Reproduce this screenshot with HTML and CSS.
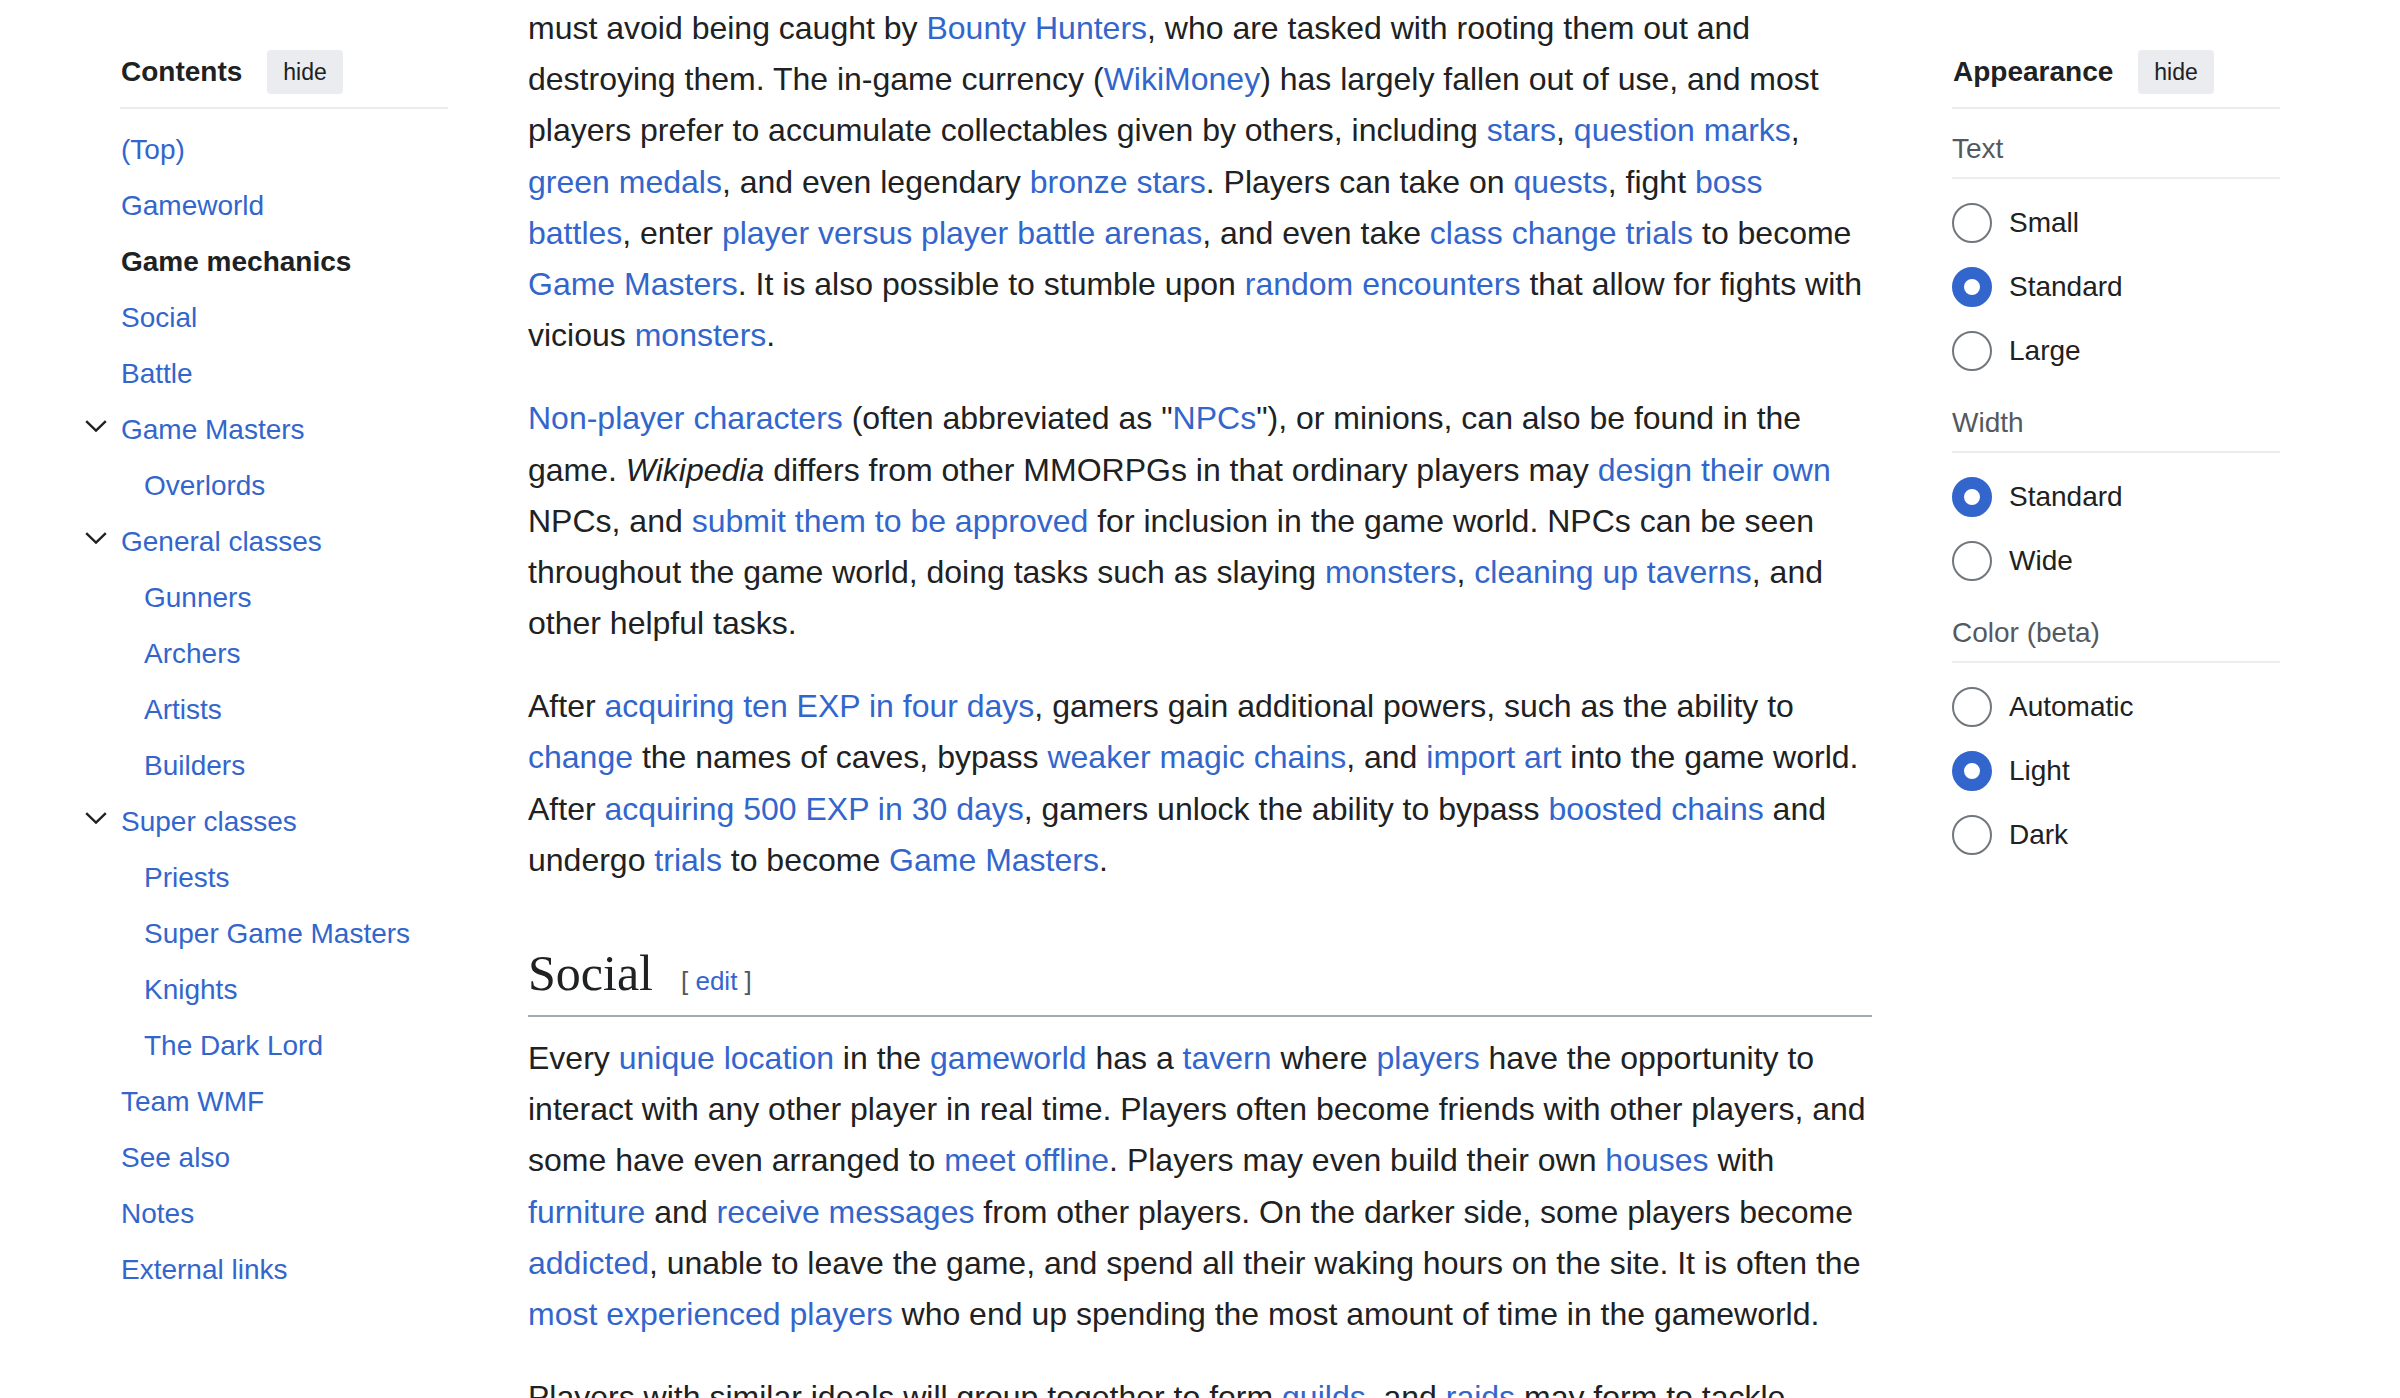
FILE: index.html
```html
<!DOCTYPE html>
<html lang="en">
<head>
<meta charset="utf-8">
<title>Wikipedia — Game mechanics</title>
<link rel="stylesheet" href="styles.css">
</head>
<body>
<div class="page">
  <nav class="toc">
    <div class="panel-header">
      <span class="panel-title">Contents</span>
      <button class="hide-btn">hide</button>
    </div>
    <ul class="toc-list">
      <li><a class="toc-link" href="#">(Top)</a></li>
      <li><a class="toc-link" href="#">Gameworld</a></li>
      <li><span class="toc-link active">Game mechanics</span></li>
      <li><a class="toc-link" href="#">Social</a></li>
      <li><a class="toc-link" href="#">Battle</a></li>
      <li class="has-children">
        <button class="toggle" aria-label="Toggle"><svg width="22" height="12" viewBox="0 0 22 12"><path d="M1.2 1.2 L11 10.6 L20.8 1.2" fill="none" stroke="#202122" stroke-width="2.4"/></svg></button>
        <a class="toc-link" href="#">Game Masters</a>
        <ul class="toc-sub">
          <li><a class="toc-link" href="#">Overlords</a></li>
        </ul>
      </li>
      <li class="has-children">
        <button class="toggle" aria-label="Toggle"><svg width="22" height="12" viewBox="0 0 22 12"><path d="M1.2 1.2 L11 10.6 L20.8 1.2" fill="none" stroke="#202122" stroke-width="2.4"/></svg></button>
        <a class="toc-link" href="#">General classes</a>
        <ul class="toc-sub">
          <li><a class="toc-link" href="#">Gunners</a></li>
          <li><a class="toc-link" href="#">Archers</a></li>
          <li><a class="toc-link" href="#">Artists</a></li>
          <li><a class="toc-link" href="#">Builders</a></li>
        </ul>
      </li>
      <li class="has-children">
        <button class="toggle" aria-label="Toggle"><svg width="22" height="12" viewBox="0 0 22 12"><path d="M1.2 1.2 L11 10.6 L20.8 1.2" fill="none" stroke="#202122" stroke-width="2.4"/></svg></button>
        <a class="toc-link" href="#">Super classes</a>
        <ul class="toc-sub">
          <li><a class="toc-link" href="#">Priests</a></li>
          <li><a class="toc-link" href="#">Super Game Masters</a></li>
          <li><a class="toc-link" href="#">Knights</a></li>
          <li><a class="toc-link" href="#">The Dark Lord</a></li>
        </ul>
      </li>
      <li><a class="toc-link" href="#">Team WMF</a></li>
      <li><a class="toc-link" href="#">See also</a></li>
      <li><a class="toc-link" href="#">Notes</a></li>
      <li><a class="toc-link" href="#">External links</a></li>
    </ul>
  </nav>

  <main class="content">
    <p class="first">must avoid being caught by <a href="#">Bounty Hunters</a>, who are tasked with rooting them out and destroying them. The in-game currency (<a href="#">WikiMoney</a>) has largely fallen out of use, and most players prefer to accumulate collectables given by others, including <a href="#">stars</a>, <a href="#">question marks</a>, <a href="#">green medals</a>, and even legendary <a href="#">bronze stars</a>. Players can take on <a href="#">quests</a>, fight <a href="#">boss battles</a>, enter <a href="#">player versus player battle arenas</a>, and even take <a href="#">class change trials</a> to become <a href="#">Game Masters</a>. It is also possible to stumble upon <a href="#">random encounters</a> that allow for fights with vicious <a href="#">monsters</a>.</p>
    <p><a href="#">Non-player characters</a> (often abbreviated as "<a href="#">NPCs</a>"), or minions, can also be found in the game. <i>Wikipedia</i> differs from other MMORPGs in that ordinary players may <a href="#">design their own</a> NPCs, and <a href="#">submit them to be approved</a> for inclusion in the game world. NPCs can be seen throughout the game world, doing tasks such as slaying <a href="#">monsters</a>, <a href="#">cleaning up taverns</a>, and other helpful tasks.</p>
    <p>After <a href="#">acquiring ten EXP in four days</a>, gamers gain additional powers, such as the ability to <a href="#">change</a> the names of caves, bypass <a href="#">weaker magic chains</a>, and <a href="#">import art</a> into the game world. After <a href="#">acquiring 500 EXP in 30 days</a>, gamers unlock the ability to bypass <a href="#">boosted chains</a> and undergo <a href="#">trials</a> to become <a href="#">Game Masters</a>.</p>
    <h2>Social<span class="editsection"><span class="bracket">[</span> <a href="#">edit</a> <span class="bracket">]</span></span></h2>
    <p>Every <a href="#">unique location</a> in the <a href="#">gameworld</a> has a <a href="#">tavern</a> where <a href="#">players</a> have the opportunity to interact with any other player in real time. Players often become friends with other players, and some have even arranged to <a href="#">meet offline</a>. Players may even build their own <a href="#">houses</a> with <a href="#">furniture</a> and <a href="#">receive messages</a> from other players. On the darker side, some players become <a href="#">addicted</a>, unable to leave the game, and spend all their waking hours on the site. It is often the <a href="#">most experienced players</a> who end up spending the most amount of time in the gameworld.</p>
    <p>Players with similar ideals will group together to form <a href="#">guilds</a>, and <a href="#">raids</a> may form to tackle larger challenges together.</p>
  </main>

  <aside class="appearance">
    <div class="panel-header">
      <span class="panel-title">Appearance</span>
      <button class="hide-btn">hide</button>
    </div>
    <div class="group">
      <div class="group-label">Text</div>
      <div class="options">
        <label class="option"><input type="radio" class="radio" name="text"><span>Small</span></label>
        <label class="option"><input type="radio" class="radio" name="text" checked><span>Standard</span></label>
        <label class="option"><input type="radio" class="radio" name="text"><span>Large</span></label>
      </div>
    </div>
    <div class="group">
      <div class="group-label">Width</div>
      <div class="options">
        <label class="option"><input type="radio" class="radio" name="width" checked><span>Standard</span></label>
        <label class="option"><input type="radio" class="radio" name="width"><span>Wide</span></label>
      </div>
    </div>
    <div class="group">
      <div class="group-label">Color (beta)</div>
      <div class="options">
        <label class="option"><input type="radio" class="radio" name="color"><span>Automatic</span></label>
        <label class="option"><input type="radio" class="radio" name="color" checked><span>Light</span></label>
        <label class="option"><input type="radio" class="radio" name="color"><span>Dark</span></label>
      </div>
    </div>
  </aside>
</div>
</body>
</html>
```

FILE: styles.css
```css
html, body {
  margin: 0;
  padding: 0;
  background: #ffffff;
}

body {
  font-family: "Liberation Sans", Arial, Helvetica, sans-serif;
  color: #202122;
  overflow: hidden;
}

a {
  color: #3366cc;
  text-decoration: none;
}

.page {
  display: flex;
  align-items: flex-start;
  gap: 80px;
  padding-left: 120px;
}

/* ---------- side panels ---------- */
.toc,
.appearance {
  width: 328px;
  flex: none;
  padding-top: 50px;
}

.panel-header {
  display: flex;
  align-items: center;
  gap: 25px;
  height: 44px;
  padding-bottom: 13px;
  padding-left: 1px;
  border-bottom: 2px solid #eaecf0;
}

.panel-title {
  font-size: 28px;
  font-weight: bold;
  color: #202122;
}

.hide-btn {
  font-family: "Liberation Sans", Arial, sans-serif;
  font-size: 23px;
  color: #202122;
  background: #eaecf0;
  border: none;
  border-radius: 4px;
  height: 44px;
  padding: 0 16px;
}

/* ---------- table of contents ---------- */
.toc-list {
  list-style: none;
  margin: 0;
  padding: 13px 0 0 1px;
}

.toc-list ul {
  list-style: none;
  margin: 0;
}

.toc-sub {
  padding-left: 23px;
}

.toc-list li {
  position: relative;
}

.toc-link {
  display: block;
  font-size: 28px;
  line-height: 56px;
  white-space: nowrap;
}

.toc-link.active {
  font-weight: bold;
  color: #202122;
}

.toggle {
  position: absolute;
  left: -36px;
  top: 18px;
  width: 22px;
  height: 12px;
  padding: 0;
  border: none;
  background: none;
  display: block;
}

.toggle svg {
  display: block;
}

/* ---------- main content ---------- */
.content {
  width: 1344px;
  flex: none;
  padding-top: 3px;
  font-size: 32px;
  line-height: 1.6;
}

.content p {
  margin: 16px 0 32px;
}

.content p.first {
  margin-top: 0;
}

.content h2 {
  font-family: "Liberation Serif", "Times New Roman", serif;
  font-weight: normal;
  font-size: 50px;
  line-height: 66px;
  margin: 54px 0 0;
  padding-bottom: 9px;
  border-bottom: 2px solid #a2a9b1;
  color: #202122;
}

.editsection {
  font-family: "Liberation Sans", Arial, sans-serif;
  font-size: 26px;
  line-height: 1;
  margin-left: 28px;
}

.bracket {
  color: #54595d;
}

/* ---------- appearance panel ---------- */
.group {
  padding-top: 12px;
}

.group-label {
  font-size: 28px;
  line-height: 56px;
  color: #54595d;
  border-bottom: 2px solid #eaecf0;
}

.options {
  padding-top: 12px;
}

.option {
  display: flex;
  align-items: center;
  gap: 17px;
  height: 64px;
  font-size: 28px;
  color: #202122;
}

.radio {
  appearance: none;
  -webkit-appearance: none;
  margin: 0;
  width: 40px;
  height: 40px;
  box-sizing: border-box;
  border: 2px solid #72777d;
  border-radius: 50%;
  background: #ffffff;
  flex: none;
}

.radio:checked {
  border: 12px solid #3366cc;
}
```
